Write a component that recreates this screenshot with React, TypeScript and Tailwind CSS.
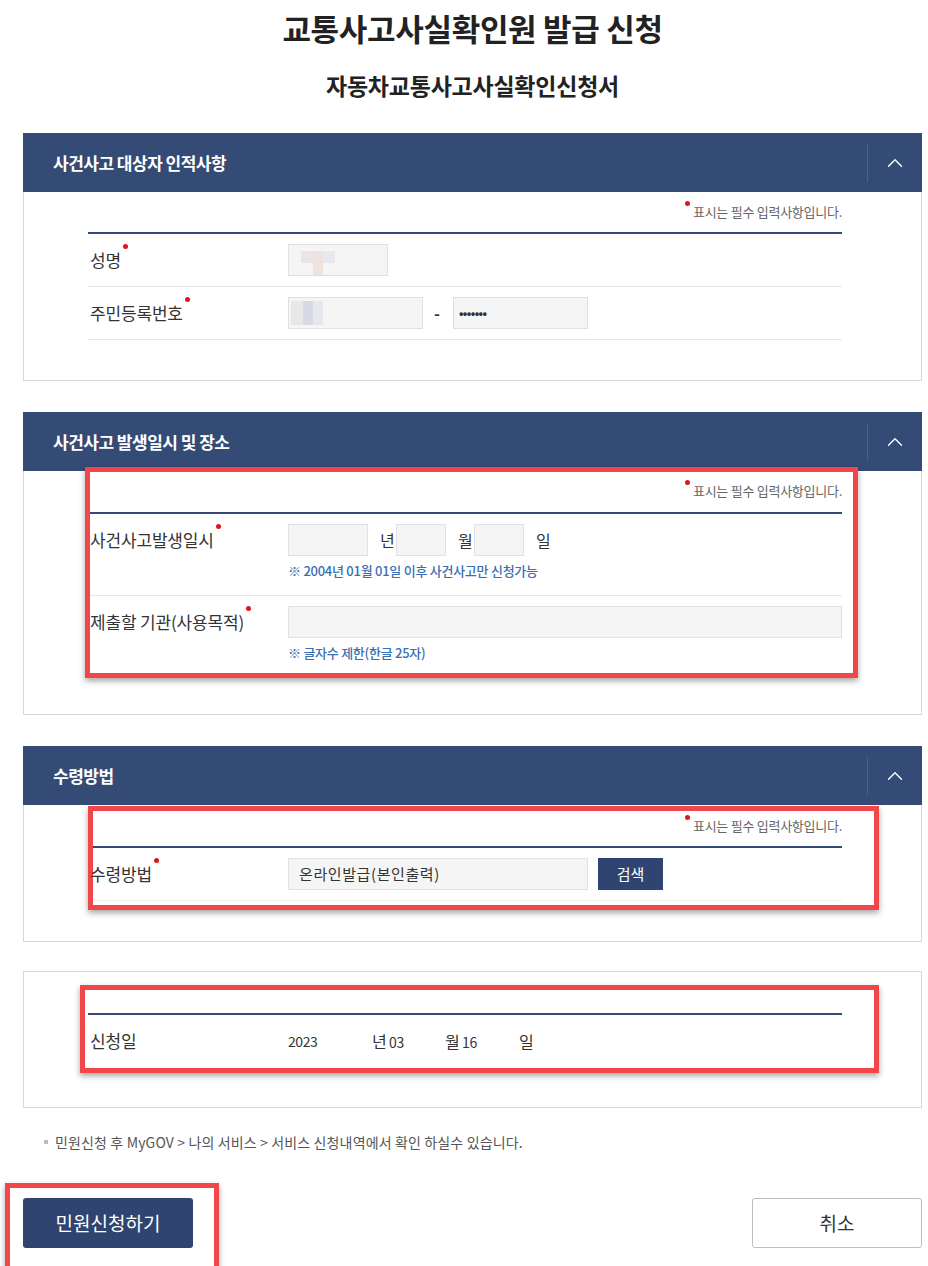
import { ChevronUp } from 'lucide-react';
import type { ReactNode } from 'react';

const FONT = "font-['Noto_Sans_CJK_KR','Noto_Sans',sans-serif]";

function RedBox({ className }: { className: string }) {
  return (
    <div
      className={`pointer-events-none absolute border-[5px] border-[#f2474a] shadow-[0_3px_6px_rgba(0,0,0,0.35)] ${className}`}
    />
  );
}

function Required({ children }: { children: ReactNode }) {
  return (
    <span className="relative inline-block">
      {children}
      <span className="absolute -right-[7px] -top-[3px] h-[5px] w-[5px] rounded-full bg-[#e0141e]" />
    </span>
  );
}

function Note() {
  return (
    <div className="flex h-[20px] items-center justify-end text-[13px] tracking-[-0.02em] text-[#666]">
      <span className="relative">
        <span className="absolute -left-[8px] -top-[1px] h-[5px] w-[5px] rounded-full bg-[#e0141e]" />
        표시는 필수 입력사항입니다.
      </span>
    </div>
  );
}

function SectionHeader({ title }: { title: string }) {
  return (
    <div className="flex h-[59px] items-center bg-[#344b76]">
      <h3 className="flex-1 pl-[30px] text-[17px] font-bold tracking-[-0.03em] text-white">{title}</h3>
      <div className="h-[38px] w-px bg-[#4d6188]" />
      <div className="flex w-[54px] items-center justify-center text-white">
        <ChevronUp size={26} strokeWidth={1.3} />
      </div>
    </div>
  );
}

function Input({ className, children }: { className: string; children?: ReactNode }) {
  return (
    <div className={`flex h-[32px] items-center border border-[#e0e0e0] bg-[#f5f5f5] ${className}`}>
      {children}
    </div>
  );
}

function Label({ children }: { children: ReactNode }) {
  return (
    <div className="flex h-[32px] w-[200px] shrink-0 items-center pl-[2px] text-[17px] tracking-[-0.01em] text-[#333]">
      {children}
    </div>
  );
}

function Unit({ children }: { children: ReactNode }) {
  return <span className="w-[28px] shrink-0 pl-[12px] text-[16px]">{children}</span>;
}

export default function App() {
  return (
    <div className={`${FONT} min-h-[1266px] w-[928px] bg-white pl-[23px] pr-[6px] pb-[18px]`}>
      <h1 className="pt-[8px] text-center text-[31px] font-bold leading-[40px] tracking-[-0.01em] text-[#222]">
        교통사고사실확인원 발급 신청
      </h1>
      <h2 className="mt-[22px] text-center text-[23px] font-bold leading-[30px] tracking-[-0.01em] text-[#222]">
        자동차교통사고사실확인신청서
      </h2>

      {/* section 1 */}
      <section className="mt-[33px]">
        <SectionHeader title="사건사고 대상자 인적사항" />
        <div className="border border-t-0 border-[#d8d8d8] pb-[40px] pt-[10px]">
          <div className="ml-[64px] mr-[79px]">
            <Note />
            <div className="mt-[10px] border-t-2 border-[#344b76]" />
            <div className="flex h-[53px] items-center border-b border-[#e6e6e6]">
              <Label>
                <Required>성명</Required>
              </Label>
              <Input className="w-[100px] items-start pl-[12px] pt-[6px]">
                <div className="flex">
                  <div className="h-[12px] w-[12px] bg-[#ebe6e6]" />
                  <div className="h-[24px] w-[10px] bg-[#efe3dc]" />
                  <div className="h-[12px] w-[12px] bg-[#e7e9ee]" />
                </div>
              </Input>
            </div>
            <div className="flex h-[53px] items-center border-b border-[#e6e6e6]">
              <Label>
                <Required>주민등록번호</Required>
              </Label>
              <Input className="w-[135px] pl-[2px]">
                <div className="flex">
                  <div className="h-[24px] w-[12px] bg-[#e9e7e7]" />
                  <div className="h-[24px] w-[10px] bg-[#d9d9e6]" />
                  <div className="h-[24px] w-[10px] bg-[#e7e7ee]" />
                </div>
              </Input>
              <span className="ml-[11px] mr-[13px] text-[16px] font-bold text-[#333]">-</span>
              <Input className="w-[135px] pl-[5px] text-[12px] font-bold tracking-[-0.05em] text-[#333]">
                •••••••
              </Input>
            </div>
          </div>
        </div>
      </section>

      {/* section 2 */}
      <section className="mt-[31px]">
        <SectionHeader title="사건사고 발생일시 및 장소" />
        <div className="relative border border-t-0 border-[#d8d8d8] pb-[52px] pt-[10px]">
          <RedBox className="left-[61px] top-[-4px] h-[211px] w-[773px]" />
          <div className="ml-[64px] mr-[79px]">
            <Note />
            <div className="mt-[11px] border-t-2 border-[#344b76]" />
            <div className="flex border-b border-[#e6e6e6] pb-[15px] pt-[10px]">
              <Label>
                <Required>사건사고발생일시</Required>
              </Label>
              <div>
                <div className="flex items-center text-[#333]">
                  <Input className="w-[80px]" />
                  <Unit>년</Unit>
                  <Input className="w-[50px]" />
                  <Unit>월</Unit>
                  <Input className="w-[50px]" />
                  <Unit>일</Unit>
                </div>
                <p className="mt-[6px] text-[13px] font-medium leading-[18px] tracking-[-0.02em] text-[#3a6fb3]">
                  ※ 2004년 01월 01일 이후 사건사고만 신청가능
                </p>
              </div>
            </div>
            <div className="flex pt-[10px]">
              <Label>
                <Required>제출할 기관(사용목적)</Required>
              </Label>
              <div className="flex-1">
                <Input className="w-full" />
                <p className="mt-[6px] text-[13px] font-medium leading-[18px] tracking-[-0.02em] text-[#3a6fb3]">
                  ※ 글자수 제한(한글 25자)
                </p>
              </div>
            </div>
          </div>
        </div>
      </section>

      {/* section 3 */}
      <section className="mt-[31px]">
        <SectionHeader title="수령방법" />
        <div className="relative border border-t-0 border-[#d8d8d8] pb-[40px] pt-[11px]">
          <RedBox className="left-[64px] top-[1px] h-[104px] w-[791px]" />
          <div className="ml-[64px] mr-[79px]">
            <Note />
            <div className="mt-[10px] border-t-2 border-[#344b76]" />
            <div className="flex h-[53px] items-center border-b border-[#eeeeee]">
              <Label>
                <Required>수령방법</Required>
              </Label>
              <Input className="w-[300px] pl-[10px] text-[15px] tracking-[0.04em] text-[#333]">
                온라인발급(본인출력)
              </Input>
              <button className="ml-[10px] h-[32px] w-[65px] bg-[#2f4470] text-[15px] text-white">검색</button>
            </div>
          </div>
        </div>
      </section>

      {/* section 4 */}
      <section className="relative mt-[29px] border border-[#d8d8d8] pb-[40px] pt-[41px]">
        <RedBox className="left-[56px] top-[13px] h-[88px] w-[799px]" />
        <div className="ml-[64px] mr-[79px]">
          <div className="border-t-2 border-[#344b76]" />
          <div className="flex h-[52px] items-center text-[#333]">
            <Label>신청일</Label>
            <div className="flex items-center text-[14px] tracking-[-0.03em]">
              <span className="w-[84px]">2023</span>
              <span className="w-[73px]">
                <span className="text-[16px]">년</span> 03
              </span>
              <span className="w-[74px]">
                <span className="text-[16px]">월</span> 16
              </span>
              <span className="text-[16px]">일</span>
            </div>
          </div>
        </div>
      </section>

      <p className="mt-[26px] flex items-center pl-[21px] text-[14px] leading-[16px] tracking-[0.01em] text-[#555]">
        <span className="mr-[7px] h-[4px] w-[4px] bg-[#bbb]" />
        민원신청 후 MyGOV &gt; 나의 서비스 &gt; 서비스 신청내역에서 확인 하실수 있습니다.
      </p>

      <div className="relative mt-[48px] flex justify-between">
        <RedBox className="-left-[18px] -top-[15px] h-[90px] w-[214px]" />
        <button className="h-[50px] w-[170px] rounded-[3px] bg-[#2f4470] text-[19px] text-white">
          민원신청하기
        </button>
        <button className="h-[50px] w-[170px] rounded-[3px] border border-[#bdbdbd] bg-white text-[19px] text-[#333]">
          취소
        </button>
      </div>
    </div>
  );
}
